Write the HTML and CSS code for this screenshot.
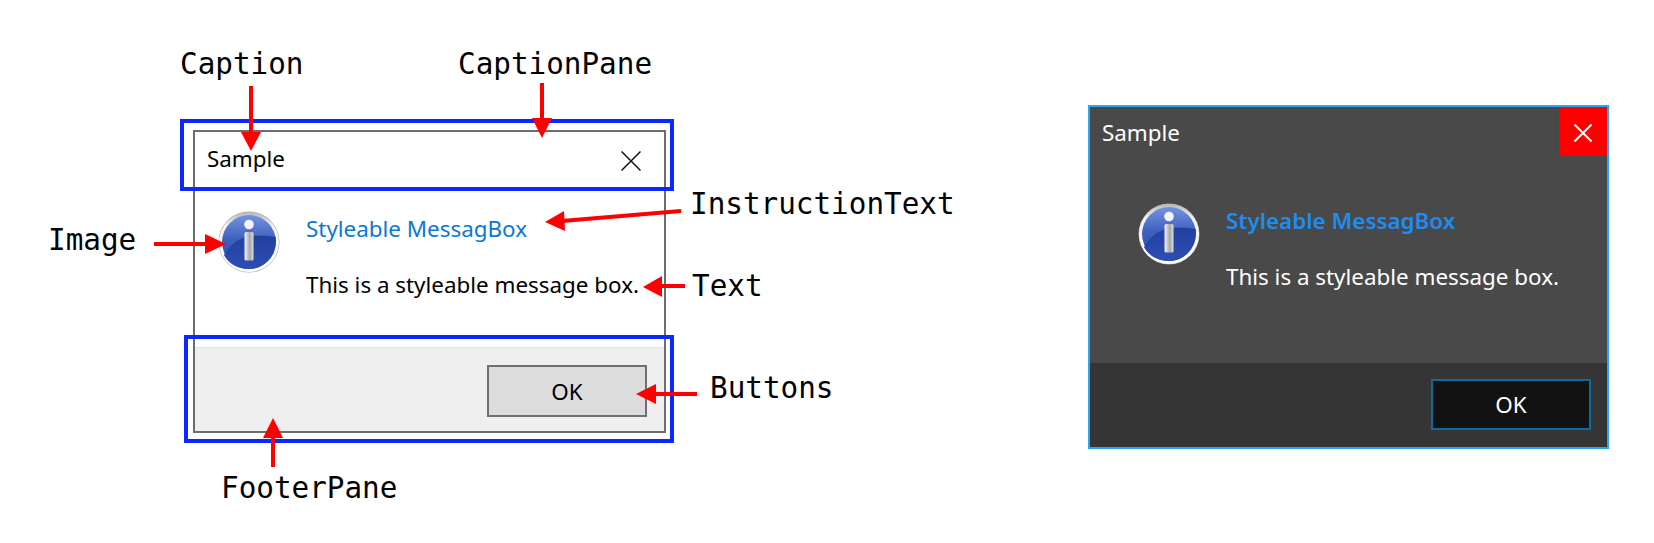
FILE: index.html
```html
<!DOCTYPE html>
<html lang="en">
<head>
    <meta charset="UTF-8">
    <meta name="viewport" content="width=device-width, initial-scale=1.0">
    <title>Styleable MessageBox</title>
    <link rel="stylesheet" href="styles.css">
</head>
<body>
    <svg width="0" height="0" class="defs">
        <defs>
            <linearGradient id="rim" x1="0" y1="0" x2="0" y2="1">
                <stop offset="0" stop-color="#b8b8b8"/>
                <stop offset="0.25" stop-color="#f4f4f4"/>
                <stop offset="1" stop-color="#ffffff"/>
            </linearGradient>
            <linearGradient id="disc" x1="0" y1="0" x2="0" y2="1">
                <stop offset="0" stop-color="#7393e2"/>
                <stop offset="0.45" stop-color="#3f60bd"/>
                <stop offset="1" stop-color="#2a49a8"/>
            </linearGradient>
            <linearGradient id="shade" x1="0" y1="0" x2="0" y2="1">
                <stop offset="0" stop-color="#22409f"/>
                <stop offset="1" stop-color="#2c4db3"/>
            </linearGradient>
            <linearGradient id="stem" x1="0" y1="0" x2="1" y2="0">
                <stop offset="0" stop-color="#f4f4f4"/>
                <stop offset="0.6" stop-color="#a6a6a6"/>
                <stop offset="1" stop-color="#e2e2e2"/>
            </linearGradient>
            <symbol id="info-icon" viewBox="0 0 62 62">
                <circle cx="31" cy="31" r="30.5" fill="#a9a9a9"/>
                <circle cx="31" cy="31" r="30" fill="url(#rim)"/>
                <circle cx="31" cy="31" r="27" fill="url(#disc)"/>
                <path d="M6 44C12 33 22 26 34 25c8-.6 16-.4 23.7 1C59.5 43 47 58 31 58 19 58 10 52 6 44z" fill="url(#shade)"/>
                <circle cx="31" cy="13.5" r="4.8" fill="#f2f4fa"/>
                <rect x="26.5" y="21" width="9" height="28.5" rx="1.5" fill="url(#stem)"/>
            </symbol>
        </defs>
    </svg>

    <div class="stage">
        <div class="dialog dialog-light">
            <div class="caption">
                <span class="caption-title">Sample</span>
                <span class="close-btn">
                    <svg width="20" height="20" viewBox="0 0 20 20"><path d="M0.5 0.5L19.5 19.5M19.5 0.5L0.5 19.5" stroke="currentColor" stroke-width="1.5" fill="none"/></svg>
                </span>
            </div>
            <div class="content">
                <svg class="info-icon"><use href="#info-icon"/></svg>
                <div class="message">
                    <div class="instruction">Styleable MessagBox</div>
                    <div class="text">This is a styleable message box.</div>
                </div>
            </div>
            <div class="footer">
                <button class="ok-btn" type="button">OK</button>
            </div>
        </div>

        <div class="dialog dialog-dark">
            <div class="caption">
                <span class="caption-title">Sample</span>
                <span class="close-btn">
                    <svg width="18" height="18" viewBox="0 0 18 18"><path d="M0.5 0.5L17.5 17.5M17.5 0.5L0.5 17.5" stroke="currentColor" stroke-width="2" fill="none"/></svg>
                </span>
            </div>
            <div class="content">
                <svg class="info-icon"><use href="#info-icon"/></svg>
                <div class="message">
                    <div class="instruction">Styleable MessagBox</div>
                    <div class="text">This is a styleable message box.</div>
                </div>
            </div>
            <div class="footer">
                <button class="ok-btn" type="button">OK</button>
            </div>
        </div>

        <!-- callouts on top of the left dialog -->
        <svg class="callouts" width="1654" height="543" viewBox="0 0 1654 543">
            <rect x="182" y="121" width="490" height="68" class="frame"/>
            <rect x="186" y="337" width="486" height="104" class="frame"/>
            <g class="arrow">
                <path d="M251 86V134"/><polygon points="241,132 261,132 251,151"/>
                <path d="M542 83V120"/><polygon points="532,118 552,118 542,138"/>
                <path d="M154 244H207"/><polygon points="205,234 205,254 226,244"/>
                <path d="M681 211L562 221"/><polygon points="564,211 565,231 545,222"/>
                <path d="M685 286H660"/><polygon points="662,276 662,297 643,287"/>
                <path d="M697 394H654"/><polygon points="656,384 656,404 636,394"/>
                <path d="M273 467V436"/><polygon points="263,438 283,438 273,418"/>
            </g>
        </svg>
        <span class="label label-caption">Caption</span>
        <span class="label label-pane">CaptionPane</span>
        <span class="label label-image">Image</span>
        <span class="label label-instruction">InstructionText</span>
        <span class="label label-text">Text</span>
        <span class="label label-buttons">Buttons</span>
        <span class="label label-footer">FooterPane</span>
    </div>
</body>
</html>
```

FILE: styles.css
```css
html, body {
    margin: 0;
    padding: 0;
    background: #fff;
}
.defs {
    position: absolute;
}
.stage {
    position: relative;
    display: flex;
    align-items: flex-start;
    width: 1654px;
    height: 543px;
    overflow: hidden;
    font-family: "Noto Sans", sans-serif;
    font-size: 22.4px;
}
.dialog {
    display: flex;
    flex-direction: column;
    box-sizing: border-box;
}
.caption {
    display: flex;
    justify-content: space-between;
    box-sizing: border-box;
}
.content {
    flex: 1;
    display: flex;
}
.message {
    display: flex;
    flex-direction: column;
}
.instruction, .text {
    line-height: 28px;
    white-space: nowrap;
}
.footer {
    display: flex;
    justify-content: flex-end;
    box-sizing: border-box;
}
.ok-btn {
    box-sizing: border-box;
    padding: 0;
    border-radius: 0;
    font-family: inherit;
    font-size: 22.4px;
    cursor: pointer;
}
.info-icon {
    flex: none;
    width: 62px;
    height: 62px;
}

/* light dialog */
.dialog-light {
    width: 473px;
    height: 303px;
    margin: 130px 0 0 193px;
    border: 2px solid #6d6d6d;
    background: #fff;
    color: #000;
}
.dialog-light .caption {
    height: 52px;
    padding: 0 23px 0 12px;
    align-items: center;
}
.dialog-light .close-btn {
    display: flex;
    margin-top: 6px;
    color: #111;
}
.dialog-light .content {
    padding: 27px 0 0 23px;
}
.dialog-light .message {
    margin: 4px 0 0 26px;
    gap: 28px;
}
.dialog-light .instruction {
    color: #0a78d7;
}
.dialog-light .footer {
    height: 84px;
    padding: 17px 17px 0 0;
    background: #efefef;
    border-top: 1px solid #e6e6e6;
}
.dialog-light .ok-btn {
    width: 160px;
    height: 52px;
    border: 2px solid #707070;
    background: #dcdcdc;
    color: #000;
}

/* dark dialog */
.dialog-dark {
    width: 521px;
    height: 344px;
    margin: 105px 0 0 422px;
    border: 2px solid #2aa6f5;
    background: #494949;
    color: #fff;
}
.dialog-dark .caption {
    height: 48px;
    padding-left: 12px;
}
.dialog-dark .caption-title {
    margin-top: 2px;
    line-height: 48px;
}
.dialog-dark .close-btn {
    display: flex;
    align-items: center;
    justify-content: center;
    box-sizing: border-box;
    width: 48px;
    height: 48px;
    padding-top: 4px;
    background: #ff0000;
}
.dialog-dark .content {
    padding: 48px 0 0 48px;
}
.dialog-dark .message {
    margin: 4px 0 0 26px;
    gap: 28px;
}
.dialog-dark .instruction {
    color: #1e8cf0;
    font-weight: 600;
}
.dialog-dark .footer {
    height: 84px;
    padding: 16px 16px 0 0;
    background: #353535;
}
.dialog-dark .ok-btn {
    width: 160px;
    height: 51px;
    border: 2px solid #0d6a9e;
    background: #121212;
    color: #fff;
}

/* annotations */
.callouts {
    position: absolute;
    left: 0;
    top: 0;
}
.frame {
    fill: none;
    stroke: #0a28ff;
    stroke-width: 4;
}
.arrow path {
    fill: none;
    stroke: #ff0000;
    stroke-width: 4;
}
.arrow polygon {
    fill: #ff0000;
}
.label {
    position: absolute;
    font-family: "DejaVu Sans Mono", monospace;
    font-size: 29.3px;
    line-height: 34px;
    color: #000;
    white-space: nowrap;
}
.label-caption { left: 180px; top: 47px; }
.label-pane { left: 458px; top: 47px; }
.label-image { left: 48px; top: 223px; }
.label-instruction { left: 690px; top: 187px; }
.label-text { left: 692px; top: 269px; }
.label-buttons { left: 710px; top: 371px; }
.label-footer { left: 221px; top: 471px; }
```
